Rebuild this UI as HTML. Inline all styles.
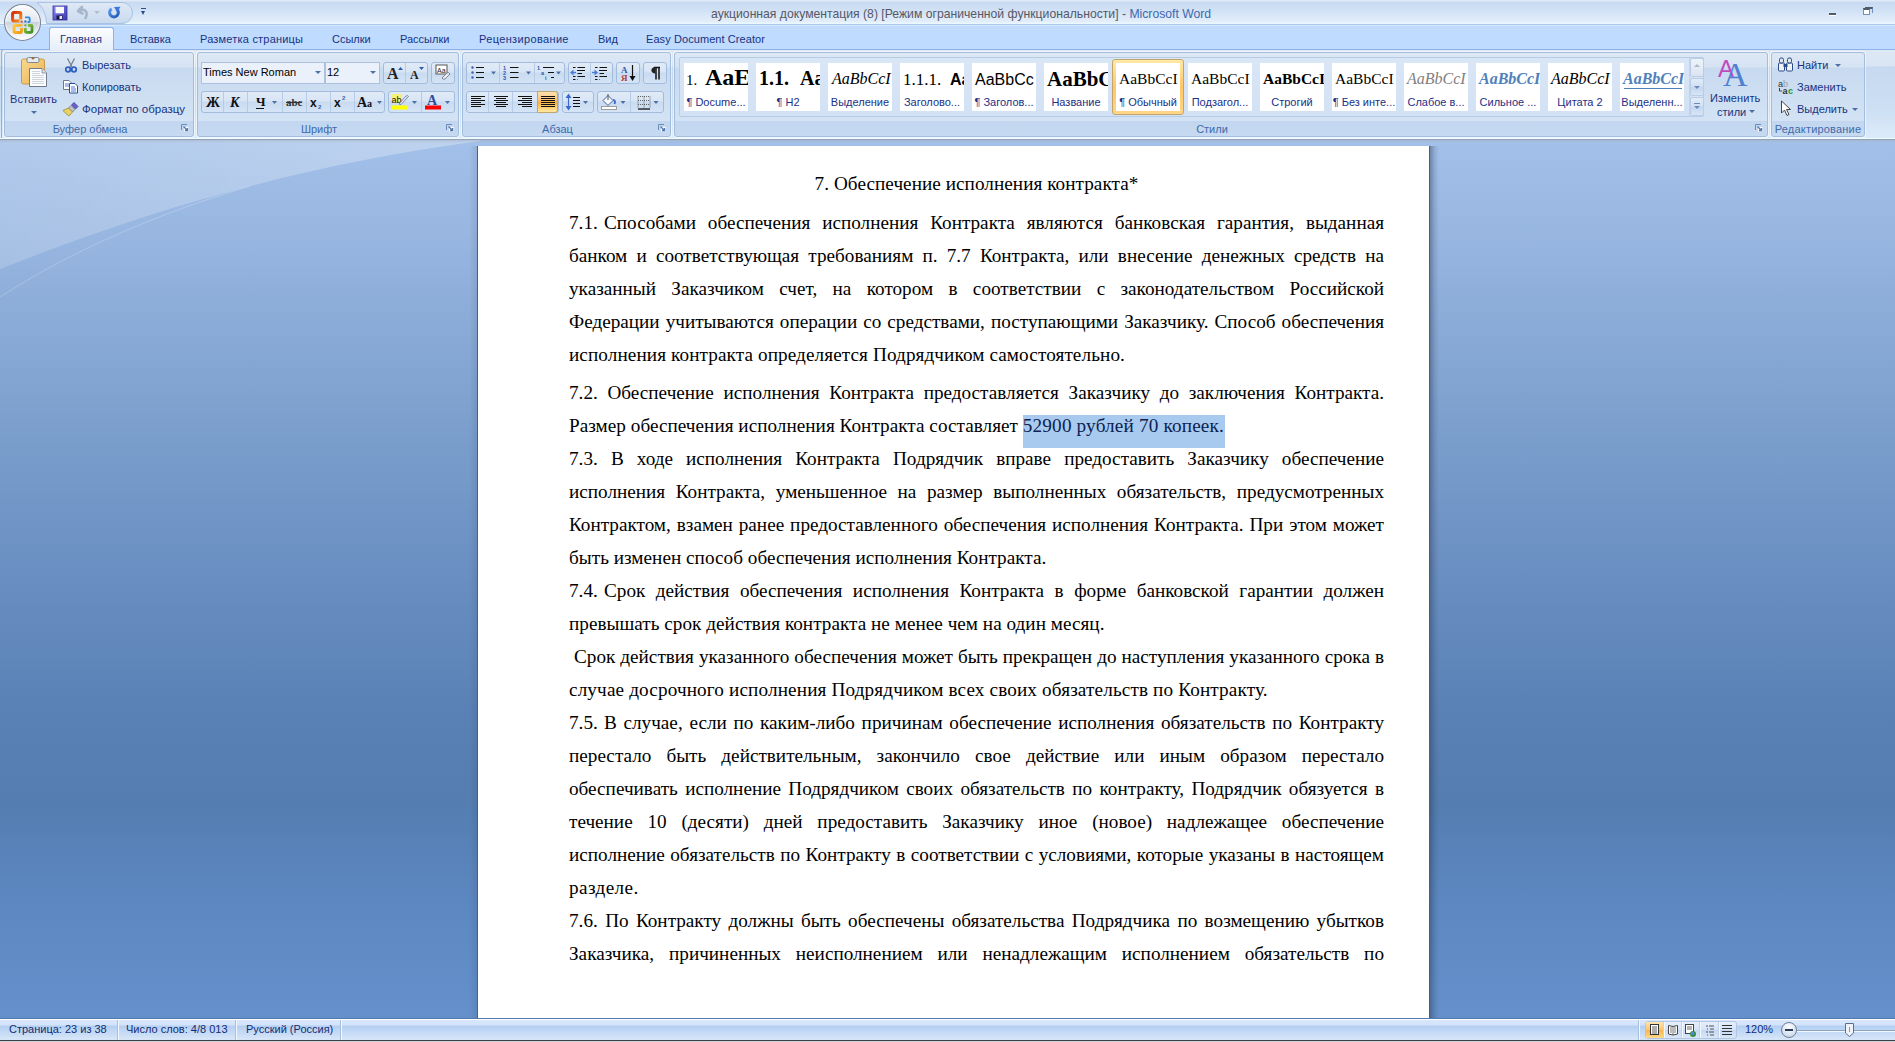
<!DOCTYPE html>
<html><head><meta charset="utf-8">
<style>
*{box-sizing:border-box}
html,body{margin:0;padding:0}
body{width:1895px;height:1042px;overflow:hidden;position:relative;font-family:"Liberation Sans",sans-serif;background:#bfdbff}
.a{position:absolute}
#title{left:0;top:0;width:1895px;height:26px;background:linear-gradient(#e0e9f6 0,#e0e9f6 1px,#c7daf2 2px,#d3e3f6 12px,#e4eefa 22px,#e9f7ff 23px,#e9f7ff 24px,#a9c9f1 24px,#a9c9f1 25px,#dce7f5 25px)}
#tabs{left:0;top:26px;width:1895px;height:23px;background:#bfdbff}
.grp{position:absolute;top:52px;height:85px;border:1px solid #a3bddc;border-radius:3px;background:linear-gradient(#dde8f5 0,#d6e3f3 14px,#c8daf0 15px,#d3e3f5 68px,#c2d7ef 68px,#c6daf2 84px);box-shadow:0 0 0 1px rgba(255,255,255,.55)}
#doc{left:0;top:140px;width:1895px;height:879px;background:linear-gradient(#a2c0e9 0px,#94b3de 120px,#7fa2cf 260px,#6b90c2 420px,#5a81b6 570px,#547db1 660px,#5c87c0 760px,#6590cb 879px);overflow:hidden}
#page{left:478px;top:6px;width:951px;height:880px;background:#fff;box-shadow:-1px 0 0 #565e6a,1px 0 0 #565e6a}
#shadowR{left:1430px;top:6px;width:9px;height:880px;background:linear-gradient(90deg,rgba(40,55,80,.42),rgba(40,55,80,.15) 50%,rgba(40,55,80,0))}
#shadowL{left:469px;top:6px;width:8px;height:880px;background:linear-gradient(270deg,rgba(40,60,90,.12),rgba(40,60,90,0))}
.ln{position:absolute;left:91px;width:815px;height:33px;line-height:33px;font-family:"Liberation Serif",serif;font-size:19.2px;color:#000;white-space:nowrap}
.j{text-align:justify;text-align-last:justify;word-spacing:-2px}
.sel{color:#0b2252;letter-spacing:0.17px}
#status{left:0;top:1019px;width:1895px;height:21px;background:linear-gradient(#d8e7fb 0,#d3e3f9 5px,#b2cef2 6px,#bcd5f4 9px,#c8dcf6 14px,#d8e6f7 19px,#cde2fb 20px);border-top:1px solid #fff}
#tb{left:0;top:1040px;width:1895px;height:2px;background:linear-gradient(#3c3f44 0,#3c3f44 1px,#cdd3dc 1px)}
.t{position:absolute;font-size:11px;line-height:13px;color:#17337f;white-space:nowrap}
.dd{position:absolute;width:0;height:0;border-left:3px solid transparent;border-right:3px solid transparent;border-top:3px solid #4c6fa5}
.combo{position:absolute;top:62px;height:22px;border:1px solid #abc1de;background:#eaf1fb}
.bg{position:absolute;height:22px;border:1px solid #a4bcdb;border-radius:3px;background:linear-gradient(#e1ebf7 0,#d8e5f5 45%,#c9dbf1 50%,#d5e4f6 100%)}
.sep{position:absolute;width:1px;background:#b5cbe6}
.gl{color:#3e6aaa}
.st{position:absolute;top:3px;font-size:11px;line-height:13px;color:#142c72;white-space:nowrap}
.ssep{position:absolute;top:0;width:1px;height:20px;background:#a9bfdc;box-shadow:1px 0 0 #f3f8ff}
</style></head>
<body>
<div id="title" class="a">
  <svg class="a" style="left:0;top:0" width="160" height="25">
    <defs><linearGradient id="qg" x1="0" y1="0" x2="0" y2="1"><stop offset="0" stop-color="#dfe9f6"/><stop offset="1" stop-color="#c9daef"/></linearGradient></defs>
    <path d="M37 2.5 H122 A10.5 10.5 0 0 1 122 23.5 H46.5 C46 14 43 7 37 2.5 Z" fill="url(#qg)" stroke="#a9c2e2" stroke-width="1"/>
  </svg>
  <svg class="a" style="left:52px;top:5px" width="16" height="16" viewBox="0 0 16 16">
    <defs><linearGradient id="sg" x1="0" y1="0" x2="1" y2="1"><stop offset="0" stop-color="#8a86f0"/><stop offset="1" stop-color="#3c36b0"/></linearGradient></defs>
    <rect x="1" y="1" width="14" height="14" fill="url(#sg)" stroke="#33309a" stroke-width="0.8"/>
    <rect x="3.5" y="1.8" width="8.5" height="6.5" fill="#f6f8fc"/>
    <rect x="4.5" y="10.5" width="6" height="4" fill="#1a1a3a"/>
    <rect x="7.5" y="11" width="2.5" height="3" fill="#e8e8f0"/>
  </svg>
  <svg class="a" style="left:75px;top:5px" width="16" height="16" viewBox="0 0 16 16">
    <path d="M3 6 L7 2 M3 6 L7.5 8.5 M3.5 6 C9 3 14 6 10.5 13" fill="none" stroke="#a7b6cc" stroke-width="2.6" stroke-linecap="round"/>
  </svg>
  <div class="a" style="left:94px;top:11px;width:0;height:0;border-left:3px solid transparent;border-right:3px solid transparent;border-top:3px solid #b1bccc"></div>
  <svg class="a" style="left:107px;top:5px" width="16" height="16" viewBox="0 0 16 16">
    <defs><linearGradient id="rg" x1="0" y1="0" x2="1" y2="1"><stop offset="0" stop-color="#5a9af0"/><stop offset="1" stop-color="#1f55b8"/></linearGradient></defs>
    <path d="M4.6 3.8 A4.4 4.4 0 1 0 9.6 4" fill="none" stroke="url(#rg)" stroke-width="3"/>
    <path d="M7 2 L13.5 1.8 L10.2 7.2 Z" fill="#3b78d8"/>
  </svg>
  <div class="a" style="left:141px;top:8px;width:5px;height:1px;background:#2b4d8a"></div>
  <div class="a" style="left:141px;top:11px;width:0;height:0;border-left:2.5px solid transparent;border-right:2.5px solid transparent;border-top:4px solid #2b4d8a"></div>
  <div class="a" style="left:711px;top:7px;font-size:12.2px;line-height:15px;color:#575866;white-space:nowrap">аукционная документация (8) [Режим ограниченной функциональности]<span> - </span><span style="color:#3d68b0">Microsoft Word</span></div>
  <div class="a" style="left:1829px;top:13px;width:7px;height:2px;background:#4f5a6a;box-shadow:0 1px 0 #fff"></div>
  <div class="a" style="left:1863px;top:8px;width:7px;height:7px;border:1px solid #6f8fbf;border-top:2px solid #4f5a6a;background:#fff"></div>
  <div class="a" style="left:1865px;top:7px;width:8px;height:6px;border:1px solid #6f8fbf;border-top:2px solid #4f5a6a;border-left:none;border-bottom:none"></div>
</div>
<div id="tabs" class="a">
  <div class="a" style="left:49px;top:1px;width:65px;height:23px;border:1px solid #8db2e3;border-bottom:none;border-radius:3px 3px 0 0;background:linear-gradient(#fbfdff,#e6eef9)"></div>
  <div class="t" style="left:60px;top:7px">Главная</div>
  <div class="t" style="left:130px;top:7px">Вставка</div>
  <div class="t" style="left:200px;top:7px;letter-spacing:0.2px">Разметка страницы</div>
  <div class="t" style="left:332px;top:7px">Ссылки</div>
  <div class="t" style="left:400px;top:7px">Рассылки</div>
  <div class="t" style="left:479px;top:7px;letter-spacing:0.35px">Рецензирование</div>
  <div class="t" style="left:598px;top:7px">Вид</div>
  <div class="t" style="left:646px;top:7px;letter-spacing:0.08px">Easy Document Creator</div>
</div>
<svg class="a" style="left:0;top:0;z-index:5" width="46" height="46" viewBox="0 0 46 46">
  <defs>
    <linearGradient id="ob1" x1="0" y1="0" x2="0" y2="1"><stop offset="0" stop-color="#fbfcfe"/><stop offset="0.47" stop-color="#e3e8ef"/><stop offset="0.5" stop-color="#c9d2de"/><stop offset="0.75" stop-color="#e6ebf2"/><stop offset="1" stop-color="#ffffff"/></linearGradient>
    <linearGradient id="lr" x1="0" y1="0" x2="1" y2="1"><stop offset="0" stop-color="#d32d0a"/><stop offset="1" stop-color="#f7941d"/></linearGradient>
    <linearGradient id="ly" x1="0" y1="0" x2="1" y2="1"><stop offset="0" stop-color="#ffc83d"/><stop offset="1" stop-color="#f39a12"/></linearGradient>
    <linearGradient id="lg" x1="0" y1="0" x2="1" y2="1"><stop offset="0" stop-color="#8cc63f"/><stop offset="1" stop-color="#3e8e1f"/></linearGradient>
  </defs>
  <circle cx="22.5" cy="22.5" r="18" fill="url(#ob1)" stroke="#7d8693" stroke-width="1.1"/>
  <circle cx="22.5" cy="22.5" r="16.8" fill="none" stroke="#ffffff" stroke-opacity="0.7" stroke-width="0.8"/>
  <path d="M20.8 19.5 V13.8 Q20.8 12.5 19.5 12.5 H14 Q12.6 12.5 12.6 14 V19.8 Q12.6 21 14 21 H19.5" fill="none" stroke="url(#lr)" stroke-width="3"/>
  <path d="M25 17.3 H28.8 Q29.7 17.3 29.7 18.2 V21.2 Q29.7 22 28.8 22 H27.5" fill="none" stroke="#2f8ae0" stroke-width="1.8"/>
  <path d="M21 25.3 H15.2 Q14 25.3 14 26.5 V31.3 Q14 32.5 15.2 32.5 H20.3 Q21.5 32.5 21.5 31.3 V28" fill="none" stroke="url(#ly)" stroke-width="2.8"/>
  <path d="M25.3 28 V31.3 Q25.3 32.3 26.3 32.3 H31 Q32 32.3 32 31.3 V26.3 Q32 25.3 31 25.3 H28" fill="none" stroke="url(#lg)" stroke-width="2.8"/>
  <circle cx="21.7" cy="21.6" r="1.2" fill="#e8541a"/><circle cx="25.4" cy="21.4" r="1.2" fill="#2a7fd6"/>
  <circle cx="21.7" cy="25.3" r="1.1" fill="#fbb232"/><circle cx="25.4" cy="25.3" r="1.1" fill="#5aa832"/>
</svg>
<div id="ribbon">
<div class="a" style="left:0;top:49px;width:1895px;height:1px;background:#8db2e3"></div>
<div class="a" style="left:50px;top:49px;width:63px;height:1px;background:#e9f0fa;z-index:2"></div>
<div class="a" style="left:0;top:50px;width:1895px;height:88px;background:linear-gradient(#dfe9f5 0,#d9e5f4 16px,#c6d9f0 17px,#cddff3 60px,#dcebfa 87px)"></div>
<div class="a" style="left:1px;top:49px;width:1900px;height:89px;border:1px solid #8db2e3;border-bottom:none;border-radius:3px 0 0 0"></div>
<div class="a" style="left:0;top:138px;width:1895px;height:1px;background:#effcff"></div>
<div class="a" style="left:0;top:139px;width:1895px;height:1px;background:#92a1b8"></div>
<div class="grp" style="left:4px;width:190px"></div>
<div class="t gl" style="left:4px;width:172px;top:123px;text-align:center">Буфер обмена</div>
<svg class="a" style="left:181px;top:124px" width="8" height="8" viewBox="0 0 8 8"><path d="M0.5 6V0.5H6" fill="none" stroke="#6a8bb5"/><rect x="3" y="3" width="4.5" height="4.5" fill="#fff"/><path d="M2.5 2.5L6.5 6.5M4 6.5H6.5V4" fill="none" stroke="#5377a8" stroke-width="1.3"/></svg>
<div class="grp" style="left:197px;width:262px"></div>
<div class="t gl" style="left:197px;width:244px;top:123px;text-align:center">Шрифт</div>
<svg class="a" style="left:446px;top:124px" width="8" height="8" viewBox="0 0 8 8"><path d="M0.5 6V0.5H6" fill="none" stroke="#6a8bb5"/><rect x="3" y="3" width="4.5" height="4.5" fill="#fff"/><path d="M2.5 2.5L6.5 6.5M4 6.5H6.5V4" fill="none" stroke="#5377a8" stroke-width="1.3"/></svg>
<div class="grp" style="left:462px;width:209px"></div>
<div class="t gl" style="left:462px;width:191px;top:123px;text-align:center">Абзац</div>
<svg class="a" style="left:658px;top:124px" width="8" height="8" viewBox="0 0 8 8"><path d="M0.5 6V0.5H6" fill="none" stroke="#6a8bb5"/><rect x="3" y="3" width="4.5" height="4.5" fill="#fff"/><path d="M2.5 2.5L6.5 6.5M4 6.5H6.5V4" fill="none" stroke="#5377a8" stroke-width="1.3"/></svg>
<div class="grp" style="left:674px;width:1094px"></div>
<div class="t gl" style="left:674px;width:1076px;top:123px;text-align:center">Стили</div>
<svg class="a" style="left:1755px;top:124px" width="8" height="8" viewBox="0 0 8 8"><path d="M0.5 6V0.5H6" fill="none" stroke="#6a8bb5"/><rect x="3" y="3" width="4.5" height="4.5" fill="#fff"/><path d="M2.5 2.5L6.5 6.5M4 6.5H6.5V4" fill="none" stroke="#5377a8" stroke-width="1.3"/></svg>
<div class="grp" style="left:1771px;width:94px"></div>
<div class="t gl" style="left:1771px;width:94px;top:123px;text-align:center;letter-spacing:0.2px">Редактирование</div>
<div class="a" style="left:679px;top:57px;width:1025px;height:60px;border:1px solid #b6cbe5;border-radius:2px;background:linear-gradient(#d9e6f6,#d2e1f4)"></div>
<svg class="a" style="left:684px;top:63px;background:#fff" width="64" height="48"><text x="2" y="22" font-family="Liberation Serif" font-size="15" font-weight="normal" font-style="normal" fill="#000">1.</text><text x="21" y="22" font-family="Liberation Serif" font-size="24" font-weight="bold" font-style="normal" fill="#000">AaE</text><text x="32" y="43" text-anchor="middle" font-family="Liberation Sans" font-size="11" fill="#1b2f86">¶ Docume...</text></svg>
<svg class="a" style="left:756px;top:63px;background:#fff" width="64" height="48"><text x="3" y="22" font-family="Liberation Serif" font-size="20" font-weight="bold" font-style="normal" fill="#000">1.1.</text><text x="44" y="22" font-family="Liberation Serif" font-size="20" font-weight="bold" font-style="normal" fill="#000">Aa</text><text x="32" y="43" text-anchor="middle" font-family="Liberation Sans" font-size="11" fill="#1b2f86">¶ H2</text></svg>
<svg class="a" style="left:828px;top:63px;background:#fff" width="64" height="48"><text x="4" y="21" font-family="Liberation Serif" font-size="16" font-weight="normal" font-style="italic" fill="#000">AaBbCcI</text><text x="32" y="43" text-anchor="middle" font-family="Liberation Sans" font-size="11" fill="#1b2f86">Выделение</text></svg>
<svg class="a" style="left:900px;top:63px;background:#fff" width="64" height="48"><text x="3" y="21.5" font-family="Liberation Serif" font-size="17" font-weight="normal" font-style="normal" fill="#000">1.1.1.</text><text x="50" y="21.5" font-family="Liberation Sans" font-size="16" font-weight="bold" font-style="normal" fill="#000">Aa</text><text x="32" y="43" text-anchor="middle" font-family="Liberation Sans" font-size="11" fill="#1b2f86">Заголово...</text></svg>
<svg class="a" style="left:972px;top:63px;background:#fff" width="64" height="48"><text x="3" y="21.5" font-family="Liberation Sans" font-size="16" font-weight="normal" font-style="normal" fill="#000">AaBbCc</text><text x="32" y="43" text-anchor="middle" font-family="Liberation Sans" font-size="11" fill="#1b2f86">¶ Заголов...</text></svg>
<svg class="a" style="left:1044px;top:63px;background:#fff" width="64" height="48"><text x="3" y="23" font-family="Liberation Serif" font-size="21" font-weight="bold" font-style="normal" fill="#000">AaBbC</text><text x="32" y="43" text-anchor="middle" font-family="Liberation Sans" font-size="11" fill="#1b2f86">Название</text></svg>
<div class="a" style="left:1112px;top:59px;width:72px;height:56px;border:1px solid #c2a46c;border-radius:3px;background:linear-gradient(#ffe9a8,#ffc766 50%,#ffd587)"></div>
<svg class="a" style="left:1116px;top:63px;background:#fff" width="64" height="48"><text x="3" y="21" font-family="Liberation Serif" font-size="15.5" font-weight="normal" font-style="normal" fill="#000">AaBbCcI</text><text x="32" y="43" text-anchor="middle" font-family="Liberation Sans" font-size="11" fill="#1b2f86">¶ Обычный</text></svg>
<svg class="a" style="left:1188px;top:63px;background:#fff" width="64" height="48"><text x="3" y="21" font-family="Liberation Serif" font-size="15.5" font-weight="normal" font-style="normal" fill="#000">AaBbCcI</text><text x="32" y="43" text-anchor="middle" font-family="Liberation Sans" font-size="11" fill="#1b2f86">Подзагол...</text></svg>
<svg class="a" style="left:1260px;top:63px;background:#fff" width="64" height="48"><text x="3" y="21" font-family="Liberation Serif" font-size="15.5" font-weight="bold" font-style="normal" fill="#000">AaBbCcI</text><text x="32" y="43" text-anchor="middle" font-family="Liberation Sans" font-size="11" fill="#1b2f86">Строгий</text></svg>
<svg class="a" style="left:1332px;top:63px;background:#fff" width="64" height="48"><text x="3" y="21" font-family="Liberation Serif" font-size="15.5" font-weight="normal" font-style="normal" fill="#000">AaBbCcI</text><text x="32" y="43" text-anchor="middle" font-family="Liberation Sans" font-size="11" fill="#1b2f86">¶ Без инте...</text></svg>
<svg class="a" style="left:1404px;top:63px;background:#fff" width="64" height="48"><text x="3" y="21" font-family="Liberation Serif" font-size="16" font-weight="normal" font-style="italic" fill="#7f7f7f">AaBbCcI</text><text x="32" y="43" text-anchor="middle" font-family="Liberation Sans" font-size="11" fill="#1b2f86">Слабое в...</text></svg>
<svg class="a" style="left:1476px;top:63px;background:#fff" width="64" height="48"><text x="3" y="21" font-family="Liberation Serif" font-size="16" font-weight="bold" font-style="italic" fill="#4f81bd">AaBbCcI</text><text x="32" y="43" text-anchor="middle" font-family="Liberation Sans" font-size="11" fill="#1b2f86">Сильное ...</text></svg>
<svg class="a" style="left:1548px;top:63px;background:#fff" width="64" height="48"><text x="3" y="21" font-family="Liberation Serif" font-size="16" font-weight="normal" font-style="italic" fill="#000">AaBbCcI</text><text x="32" y="43" text-anchor="middle" font-family="Liberation Sans" font-size="11" fill="#1b2f86">Цитата 2</text></svg>
<svg class="a" style="left:1620px;top:63px;background:#fff" width="64" height="48"><text x="3" y="21" font-family="Liberation Serif" font-size="16" font-weight="bold" font-style="italic" fill="#4f81bd">AaBbCcI</text><rect x="4" y="25" width="58" height="1" fill="#4f81bd"/><text x="32" y="43" text-anchor="middle" font-family="Liberation Sans" font-size="11" fill="#1b2f86">Выделенн...</text></svg>
<div class="a" style="left:1689px;top:58px;width:14px;height:58px;border-left:1px solid #c2d4ea"></div>
<div class="a" style="left:1690px;top:58px;width:14px;height:19px;border:1px solid #b9cde6;border-radius:2px;background:linear-gradient(#eef3fa,#dbe5f2)"></div>
<div class="a" style="left:1690px;top:78px;width:14px;height:18px;border:1px solid #b9cde6;border-radius:2px;background:linear-gradient(#e2ecf8,#cfdff3 50%,#c3d6ef 51%,#d7e5f6)"></div>
<div class="a" style="left:1690px;top:97px;width:14px;height:19px;border:1px solid #b9cde6;border-radius:2px;background:linear-gradient(#e2ecf8,#cfdff3 50%,#c3d6ef 51%,#d7e5f6)"></div>
<div class="a" style="left:1694px;top:64px;width:0;height:0;border-left:3px solid transparent;border-right:3px solid transparent;border-bottom:3px solid #b0bccc"></div>
<div class="a" style="left:1694px;top:86px;width:0;height:0;border-left:3px solid transparent;border-right:3px solid transparent;border-top:3px solid #6a8ab8"></div>
<div class="a" style="left:1694px;top:103px;width:6px;height:1px;background:#6a8ab8"></div>
<div class="a" style="left:1694px;top:106px;width:0;height:0;border-left:3px solid transparent;border-right:3px solid transparent;border-top:3px solid #6a8ab8"></div>
<!-- Clipboard -->
<svg class="a" style="left:20px;top:56px" width="28" height="32" viewBox="0 0 28 32">
  <defs><linearGradient id="cbg" x1="0" y1="0" x2="1" y2="1"><stop offset="0" stop-color="#f9d88f"/><stop offset="1" stop-color="#e9b455"/></linearGradient></defs>
  <rect x="1.5" y="3" width="23" height="25" rx="2" fill="url(#cbg)" stroke="#c89a4e"/>
  <rect x="7" y="1.5" width="12" height="5" rx="1.5" fill="#e7ebf0" stroke="#7d8794"/>
  <circle cx="13" cy="2.2" r="1.3" fill="#9a6a3a"/>
  <path d="M9.5 12.5 H22 L26.5 17 V30.5 H9.5 Z" fill="#fbfcfe" stroke="#6f7b8b"/>
  <path d="M22 12.5 V17 H26.5" fill="#dfe4ea" stroke="#8e99a6"/>
  <path d="M12 15.5H20M12 17.5H20M12 19.5H24M12 21.5H24M12 23.5H24M12 25.5H24M12 27.5H24" stroke="#c9ced6" stroke-width="0.9"/>
</svg>
<div class="t" style="left:10px;top:93px;letter-spacing:0.05px">Вставить</div>
<div class="dd" style="left:31px;top:111px"></div>
<svg class="a" style="left:65px;top:58px" width="12" height="15" viewBox="0 0 12 15">
  <path d="M2.5 0.5 L7 9 M9.5 0.5 L5 9" stroke="#7a808a" stroke-width="1.3"/>
  <circle cx="3" cy="11.5" r="2.3" fill="none" stroke="#2f5fc0" stroke-width="1.8"/>
  <circle cx="9" cy="11.5" r="2.3" fill="none" stroke="#2f5fc0" stroke-width="1.8"/>
</svg>
<div class="t" style="left:82px;top:59px">Вырезать</div>
<svg class="a" style="left:62px;top:79px" width="17" height="15" viewBox="0 0 17 15">
  <path d="M1.5 1.5H7L9.5 4V10.5H1.5Z" fill="#fff" stroke="#6c7a8f"/>
  <path d="M3 5H7M3 7H8" stroke="#4a7bd0"/>
  <path d="M7.5 4.5H13L15.5 7V14H7.5Z" fill="#fff" stroke="#2e4f90"/>
  <path d="M9 8H13M9 10H14M9 12H14" stroke="#4a7bd0"/>
</svg>
<div class="t" style="left:82px;top:81px">Копировать</div>
<svg class="a" style="left:62px;top:101px" width="18" height="16" viewBox="0 0 18 16">
  <path d="M12 1.5 L16 5.5 L13.5 8 L9.5 4 Z" fill="#6a5fcf" stroke="#433a9a" stroke-width="0.8"/>
  <path d="M9 4.5 L13 8.5 L10.5 11 L6.5 7 Z" fill="#c0c4cc" stroke="#6f747c" stroke-width="0.8"/>
  <path d="M6.5 7 L10.5 11 L7 15 Q3 12 1 9.5 Z" fill="#e8d466" stroke="#9a8a34" stroke-width="0.8"/>
</svg>
<div class="t" style="left:82px;top:103px;font-size:11.5px">Формат по образцу</div>

<!-- Font group -->
<div class="combo" style="left:201px;width:124px"></div>
<div class="t" style="left:203px;top:66px;color:#000">Times New Roman</div>
<div class="dd" style="left:315px;top:71px"></div>
<div class="combo" style="left:325px;width:55px"></div>
<div class="t" style="left:327px;top:66px;color:#000">12</div>
<div class="dd" style="left:370px;top:71px"></div>
<div class="bg" style="left:383px;top:62px;width:45px"></div>
<div class="sep" style="left:405px;top:63px;height:20px"></div>
<svg class="a" style="left:385px;top:64px" width="42" height="18" viewBox="0 0 42 18">
  <text x="2" y="15" font-family="Liberation Serif" font-weight="bold" font-size="16" fill="#222">A</text>
  <path d="M13 6 L15.5 3 L18 6 Z" fill="#2b5ca8"/>
  <text x="25" y="15" font-family="Liberation Serif" font-weight="bold" font-size="12" fill="#222">A</text>
  <path d="M34 3 L36.5 6 L39 3 Z" fill="#2b5ca8"/>
</svg>
<div class="bg" style="left:431px;top:62px;width:24px"></div>
<svg class="a" style="left:434px;top:64px" width="18" height="18" viewBox="0 0 18 18">
  <rect x="2" y="1" width="11" height="9" fill="#fff" stroke="#555"/>
  <text x="3" y="8.5" font-family="Liberation Sans" font-size="7" fill="#222">Aa</text>
  <path d="M8 14 L13 9 Q15 8 16 10 L11 15 Q9 16 8 14 Z" fill="#e8edf3" stroke="#7b8694"/>
</svg>
<div class="bg" style="left:201px;top:91px;width:184px"></div>
<div class="sep" style="left:223px;top:92px;height:20px"></div>
<div class="sep" style="left:247px;top:92px;height:20px"></div>
<div class="sep" style="left:282px;top:92px;height:20px"></div>
<div class="sep" style="left:306px;top:92px;height:20px"></div>
<div class="sep" style="left:330px;top:92px;height:20px"></div>
<div class="sep" style="left:354px;top:92px;height:20px"></div>
<svg class="a" style="left:201px;top:91px" width="184" height="22" viewBox="0 0 184 22">
  <text x="5" y="16" font-family="Liberation Serif" font-weight="bold" font-size="14" fill="#111">Ж</text>
  <text x="29" y="16" font-family="Liberation Serif" font-weight="bold" font-style="italic" font-size="14" fill="#111">К</text>
  <text x="55" y="15" font-family="Liberation Serif" font-weight="bold" font-size="13" fill="#111">Ч</text>
  <rect x="55" y="17" width="8" height="1" fill="#111"/>
  <path d="M71 10 L76 10 L73.5 13 Z" fill="#4c6fa5"/>
  <text x="85" y="15" font-family="Liberation Serif" font-weight="bold" font-size="11" fill="#333">abc</text>
  <rect x="85" y="11" width="16" height="1" fill="#333"/>
  <text x="109" y="16" font-family="Liberation Sans" font-weight="bold" font-size="12" fill="#111">x</text>
  <text x="117" y="18" font-family="Liberation Sans" font-weight="bold" font-size="6" fill="#3a62b0">2</text>
  <text x="133" y="16" font-family="Liberation Sans" font-weight="bold" font-size="12" fill="#111">x</text>
  <text x="141" y="9" font-family="Liberation Sans" font-weight="bold" font-size="6" fill="#3a62b0">2</text>
  <text x="156" y="16" font-family="Liberation Serif" font-weight="bold" font-size="14" fill="#111">A</text>
  <text x="166" y="16" font-family="Liberation Serif" font-weight="bold" font-size="10" fill="#111">a</text>
  <path d="M176 10 L181 10 L178.5 13 Z" fill="#4c6fa5"/>
</svg>
<div class="bg" style="left:388px;top:91px;width:67px"></div>
<div class="sep" style="left:421px;top:92px;height:20px"></div>
<svg class="a" style="left:388px;top:91px" width="67" height="22" viewBox="0 0 67 22">
  <rect x="4" y="3" width="10" height="9" fill="#f5f07a"/>
  <text x="3.5" y="11.5" font-family="Liberation Sans" font-size="9" fill="#111">ab</text>
  <path d="M11 13 L18 5 Q19.5 4 20.5 5.5 L13 13.5 Z" fill="#eaf0f8" stroke="#5d6f8c" stroke-width="0.8"/>
  <rect x="4" y="14.5" width="16" height="4" fill="#ffff00"/>
  <path d="M24 10 L29 10 L26.5 13 Z" fill="#4c6fa5"/>
  <text x="39" y="14" font-family="Liberation Serif" font-weight="bold" font-size="14" fill="#2d4f9a">A</text>
  <rect x="37" y="14.5" width="16" height="4" fill="#ff0000"/>
  <path d="M57 10 L62 10 L59.5 13 Z" fill="#4c6fa5"/>
</svg>

<!-- Paragraph group -->
<div class="bg" style="left:466px;top:62px;width:99px"></div>
<div class="sep" style="left:499px;top:63px;height:20px"></div>
<div class="sep" style="left:534px;top:63px;height:20px"></div>
<svg class="a" style="left:466px;top:62px" width="99" height="22" viewBox="0 0 99 22">
  <g fill="#3a62b8"><circle cx="6.5" cy="5.5" r="1.2"/><circle cx="6.5" cy="10.5" r="1.2"/><circle cx="6.5" cy="15.5" r="1.2"/></g>
  <path d="M10 5.5H18M10 10.5H18M10 15.5H18" stroke="#111" stroke-width="1.1"/>
  <path d="M25 9.5H30L27.5 12.5Z" fill="#4c6fa5"/>
  <text x="37" y="8.3" font-family="Liberation Sans" font-weight="bold" font-size="5.5" fill="#2a55b0">1</text>
  <text x="37" y="13.3" font-family="Liberation Sans" font-weight="bold" font-size="5.5" fill="#2a55b0">2</text>
  <text x="37" y="18.3" font-family="Liberation Sans" font-weight="bold" font-size="5.5" fill="#2a55b0">3</text>
  <path d="M44 5.5H52.5M44 10.5H52.5M44 15.5H52.5" stroke="#111" stroke-width="1.1"/>
  <path d="M60 9.5H65L62.5 12.5Z" fill="#4c6fa5"/>
  <text x="71" y="8.3" font-family="Liberation Sans" font-weight="bold" font-size="5.5" fill="#2a55b0">1</text>
  <text x="75" y="13.3" font-family="Liberation Sans" font-weight="bold" font-size="5.5" fill="#2a55b0">a</text>
  <text x="79" y="18.3" font-family="Liberation Sans" font-weight="bold" font-size="5.5" fill="#2a55b0">i</text>
  <path d="M77 5.5H88M82 10.5H88M85 15.5H88" stroke="#111" stroke-width="1.1"/>
  <path d="M90 9.5H95L92.5 12.5Z" fill="#4c6fa5"/>
</svg>
<div class="bg" style="left:568px;top:62px;width:45px"></div>
<div class="sep" style="left:590px;top:63px;height:20px"></div>
<svg class="a" style="left:568px;top:62px" width="45" height="22" viewBox="0 0 45 22">
  <path d="M5 5.5H7.5M9.5 5.5H17M9 8.5H17M9.5 11.5H14M9.5 14.5H17M5 14.5H7.5M5 17.5H7.5M9.5 17.5H10" stroke="#111" stroke-width="1.2"/>
  <path d="M2 10.5 L5.5 7.5 V13.5Z" fill="#4a7ad8"/><path d="M5 10.5H8" stroke="#4a7ad8" stroke-width="1.4"/>
  <path d="M27 5.5H29.5M31.5 5.5H39M31 8.5H39M31.5 11.5H36M31.5 14.5H39M27 14.5H29.5M27 17.5H29.5M31.5 17.5H32" stroke="#111" stroke-width="1.2"/>
  <path d="M30 10.5 L26.5 7.5 V13.5Z" fill="#4a7ad8"/><path d="M24 10.5H27" stroke="#4a7ad8" stroke-width="1.4"/>
</svg>
<div class="bg" style="left:616px;top:62px;width:24px"></div>
<svg class="a" style="left:616px;top:62px" width="24" height="22" viewBox="0 0 24 22">
  <text x="5" y="10.5" font-family="Liberation Serif" font-weight="bold" font-size="9" fill="#2f5ab0">A</text>
  <text x="5" y="19" font-family="Liberation Serif" font-weight="bold" font-size="9" fill="#b0403a">Я</text>
  <path d="M16.5 3V17" stroke="#111" stroke-width="1.2"/><path d="M13.5 14 L16.5 19 L19.5 14Z" fill="#111"/>
</svg>
<div class="bg" style="left:643px;top:62px;width:24px"></div>
<svg class="a" style="left:643px;top:62px" width="24" height="22" viewBox="0 0 24 22">
  <path d="M11 5.5 H17 M13 5 V17.5 M16 5 V17.5" stroke="#111" stroke-width="1.5"/>
  <path d="M12.5 5 C7 5 7 11.5 12.5 11.5 Z" fill="#222"/>
</svg>
<div class="bg" style="left:466px;top:91px;width:93px"></div>
<div class="sep" style="left:488px;top:92px;height:20px"></div>
<div class="sep" style="left:512px;top:92px;height:20px"></div>
<div class="a" style="left:537px;top:91px;width:21px;height:22px;border:1px solid #c2a46c;border-radius:0 3px 3px 0;background:linear-gradient(#fde2b0 0,#fdc57a 40%,#fbae3f 50%,#fdd782 85%,#feeaa0 100%)"></div>
<svg class="a" style="left:466px;top:91px" width="93" height="22" viewBox="0 0 93 22">
  <g stroke="#111" stroke-width="1.1">
  <path d="M5 5.5H19M5 7.5H15M5 9.5H19M5 11.5H15M5 13.5H19M5 15.5H15"/>
  <path d="M28 5.5H42M30 7.5H40M28 9.5H42M30 11.5H40M28 13.5H42M30 15.5H40"/>
  <path d="M52 5.5H66M56 7.5H66M52 9.5H66M56 11.5H66M52 13.5H66M56 15.5H66"/>
  <path d="M75 5.5H89M75 7.5H89M75 9.5H89M75 11.5H89M75 13.5H89M75 15.5H89"/>
  </g>
</svg>
<div class="bg" style="left:562px;top:91px;width:32px"></div>
<svg class="a" style="left:562px;top:91px" width="32" height="22" viewBox="0 0 32 22">
  <path d="M6.5 4V18" stroke="#3a6ad0" stroke-width="1.2"/>
  <path d="M3.5 7 L6.5 2.5 L9.5 7Z M3.5 15 L6.5 19.5 L9.5 15Z" fill="#3a6ad0"/>
  <path d="M11 6.5H18M11 9.5H18M11 12.5H18M11 15.5H18" stroke="#111" stroke-width="1.2"/>
  <path d="M21 10H26L23.5 13Z" fill="#4c6fa5"/>
</svg>
<div class="bg" style="left:597px;top:91px;width:67px"></div>
<div class="sep" style="left:630px;top:92px;height:20px"></div>
<svg class="a" style="left:597px;top:91px" width="67" height="22" viewBox="0 0 67 22">
  <path d="M6 9.5 L11 4.5 L16 9.5 L11 14.5 Z" fill="#f4f7fb" stroke="#2b4f8c" stroke-width="0.9"/>
  <path d="M11 3 V9" stroke="#555" stroke-width="1"/>
  <path d="M16 9 Q19 9 17.5 13" fill="none" stroke="#3c6fd0" stroke-width="2"/>
  <rect x="4.5" y="15.5" width="15" height="3" fill="#fff" stroke="#888" stroke-width="0.8"/>
  <path d="M23.5 10H28.5L26 13Z" fill="#4c6fa5"/>
  <path d="M41 5.5H53M41 9.5H53M41 13.5H53M41 5.5V17M47 5.5V17M53 5.5V17" stroke="#555" stroke-width="0.9" stroke-dasharray="1 1"/>
  <path d="M41 18H53" stroke="#111" stroke-width="1.3"/>
  <path d="M56.5 10H61.5L59 13Z" fill="#4c6fa5"/>
</svg>

<!-- Change styles -->
<svg class="a" style="left:1718px;top:57px" width="34" height="30" viewBox="0 0 34 30">
  <text x="0" y="20" font-family="Liberation Sans" font-size="24" fill="#c04ac0">A</text>
  <text x="5" y="29" font-family="Liberation Serif" font-size="34" fill="#4f81d0">A</text>
</svg>
<div class="t" style="left:1710px;top:92px;letter-spacing:0.1px">Изменить</div>
<div class="t" style="left:1717px;top:106px">стили</div>
<div class="dd" style="left:1749px;top:110px"></div>

<!-- Editing -->
<svg class="a" style="left:1777px;top:57px" width="17" height="15" viewBox="0 0 17 15">
  <rect x="1.5" y="6" width="6" height="8" rx="1" fill="#eef2f8" stroke="#2c4a86"/>
  <rect x="9.5" y="6" width="6" height="8" rx="1" fill="#eef2f8" stroke="#2c4a86"/>
  <rect x="2.5" y="1" width="4" height="5" rx="1.5" fill="#dfe6f0" stroke="#2c4a86"/>
  <rect x="10.5" y="1" width="4" height="5" rx="1.5" fill="#dfe6f0" stroke="#2c4a86"/>
  <rect x="6.5" y="7" width="4" height="3" fill="#2c4a86"/>
</svg>
<div class="t" style="left:1797px;top:59px">Найти</div>
<div class="dd" style="left:1835px;top:64px"></div>
<svg class="a" style="left:1777px;top:78px" width="19" height="17" viewBox="0 0 19 17">
  <text x="1" y="8.5" font-family="Liberation Sans" font-size="9" fill="#333">a</text>
  <text x="6" y="8.5" font-family="Liberation Serif" font-size="10" fill="#999">b</text>
  <path d="M2.5 10 V13 H5" fill="none" stroke="#333" stroke-width="0.9"/>
  <text x="5.5" y="16" font-family="Liberation Sans" font-weight="bold" font-size="9" fill="#333">a</text>
  <text x="11" y="16" font-family="Liberation Sans" font-weight="bold" font-size="9" fill="#1e9a1e">c</text>
</svg>
<div class="t" style="left:1797px;top:81px">Заменить</div>
<svg class="a" style="left:1780px;top:100px" width="12" height="17" viewBox="0 0 12 17">
  <path d="M1.5 1 V13 L4.5 10 L7 15.5 L9 14.5 L6.5 9.5 H10.5 Z" fill="#fff" stroke="#333" stroke-width="0.9" stroke-linejoin="round"/>
</svg>
<div class="t" style="left:1797px;top:103px">Выделить</div>
<div class="dd" style="left:1852px;top:108px"></div>

</div>
<div id="doc" class="a">
  <svg class="a" style="left:0;top:0" width="480" height="200">
    <defs><linearGradient id="sw" x1="0" y1="0" x2="1" y2="0"><stop offset="0" stop-color="#fff" stop-opacity="0.17"/><stop offset="1" stop-color="#fff" stop-opacity="0.3"/></linearGradient></defs>
    <path d="M0 0 H480 V1 C300 25 150 70 0 129 Z" fill="url(#sw)"/>
    <path d="M0 157 C70 112 150 76 250 46" fill="none" stroke="#fff" stroke-opacity="0.22" stroke-width="1"/>
  </svg>
  <div class="a" style="left:0;top:0;width:1895px;height:3px;background:linear-gradient(rgba(170,180,195,.6),rgba(170,180,195,0))"></div>
  <div id="shadowL" class="a"></div>
  <div id="shadowR" class="a"></div>
  <div id="page" class="a">
<div class="ln" style="top:21px;text-align:center;letter-spacing:0.05px">7. Обеспечение исполнения контракта*</div>
<div class="a" style="left:545px;top:269px;width:202px;height:33px;background:#a9caef"></div>
<div class="ln" style="top:60px">7.1.</div>
<div class="ln j" style="top:60px;left:126px;width:780px">Способами обеспечения исполнения Контракта являются банковская гарантия, выданная</div>
<div class="ln j" style="top:93px">банком и соответствующая требованиям п. 7.7 Контракта, или внесение денежных средств на</div>
<div class="ln j" style="top:126px">указанный Заказчиком счет, на котором в соответствии с законодательством Российской</div>
<div class="ln j" style="top:159px">Федерации учитываются операции со средствами, поступающими Заказчику. Способ обеспечения</div>
<div class="ln" style="top:192px;letter-spacing:0.1px">исполнения контракта определяется Подрядчиком самостоятельно.</div>
<div class="ln j" style="top:230px">7.2. Обеспечение исполнения Контракта предоставляется Заказчику до заключения Контракта.</div>
<div class="ln" style="top:263px;letter-spacing:0.03px">Размер обеспечения исполнения Контракта составляет <span class="sel">52900 рублей 70 копеек.</span></div>
<div class="ln j" style="top:296px">7.3. В ходе исполнения Контракта Подрядчик вправе предоставить Заказчику обеспечение</div>
<div class="ln j" style="top:329px">исполнения Контракта, уменьшенное на размер выполненных обязательств, предусмотренных</div>
<div class="ln j" style="top:362px">Контрактом, взамен ранее предоставленного обеспечения исполнения Контракта. При этом может</div>
<div class="ln" style="top:395px;letter-spacing:0.03px">быть изменен способ обеспечения исполнения Контракта.</div>
<div class="ln" style="top:428px">7.4.</div>
<div class="ln j" style="top:428px;left:126px;width:780px">Срок действия обеспечения исполнения Контракта в форме банковской гарантии должен</div>
<div class="ln" style="top:461px;letter-spacing:0.025px">превышать срок действия контракта не менее чем на один месяц.</div>
<div class="ln j" style="top:494px;left:96px;width:810px">Срок действия указанного обеспечения может быть прекращен до наступления указанного срока в</div>
<div class="ln" style="top:527px;letter-spacing:0.14px">случае досрочного исполнения Подрядчиком всех своих обязательств по Контракту.</div>
<div class="ln" style="top:560px">7.5.</div>
<div class="ln j" style="top:560px;left:126px;width:780px">В случае, если по каким-либо причинам обеспечение исполнения обязательств по Контракту</div>
<div class="ln j" style="top:593px">перестало быть действительным, закончило свое действие или иным образом перестало</div>
<div class="ln j" style="top:626px">обеспечивать исполнение Подрядчиком своих обязательств по контракту, Подрядчик обязуется в</div>
<div class="ln j" style="top:659px">течение 10 (десяти) дней предоставить Заказчику иное (новое) надлежащее обеспечение</div>
<div class="ln j" style="top:692px">исполнение обязательств по Контракту в соответствии с условиями, которые указаны в настоящем</div>
<div class="ln" style="top:725px;letter-spacing:0.4px">разделе.</div>
<div class="ln j" style="top:758px">7.6. По Контракту должны быть обеспечены обязательства Подрядчика по возмещению убытков</div>
<div class="ln j" style="top:791px">Заказчика, причиненных неисполнением или ненадлежащим исполнением обязательств по</div>

  </div>
</div>
<div id="status" class="a">
  <div class="st" style="left:9px">Страница: 23 из 38</div>
  <div class="ssep" style="left:117px"></div>
  <div class="st" style="left:126px">Число слов: 4/8 013</div>
  <div class="ssep" style="left:235px"></div>
  <div class="st" style="left:246px">Русский (Россия)</div>
  <div class="ssep" style="left:340px"></div>
  <div class="ssep" style="left:1638px"></div>
  <div class="a" style="left:1645px;top:1px;width:92px;height:18px;border:1px solid #b1c6e2;border-radius:3px;background:linear-gradient(#e6eefa,#d4e3f7 50%,#c5d9f4 51%,#d9e7f8)"></div>
  <div class="a" style="left:1646px;top:2px;width:17px;height:16px;background:linear-gradient(#fde5b2,#fcc46f 50%,#fbb24a 51%,#fed98a)"></div>
  <div class="ssep" style="left:1663px;top:2px;height:16px;background:#c3d4ea"></div>
  <div class="ssep" style="left:1681px;top:2px;height:16px;background:#c3d4ea"></div>
  <div class="ssep" style="left:1699px;top:2px;height:16px;background:#c3d4ea"></div>
  <div class="ssep" style="left:1718px;top:2px;height:16px;background:#c3d4ea"></div>
  <svg class="a" style="left:1645px;top:1px" width="92" height="18" viewBox="0 0 92 18">
    <rect x="5.5" y="3.5" width="8" height="10" fill="#fff" stroke="#333"/>
    <path d="M7 6H12M7 8H12M7 10H12M7 12H12" stroke="#333" stroke-width="0.8"/>
    <path d="M23.5 4.5 L28 5.5 L32.5 4.5 V13 L28 14 L23.5 13 Z" fill="#fff" stroke="#444"/>
    <path d="M28 5.5V14M25 7H27M25 9H27M25 11H27M29 7H31M29 9H31M29 11H31" stroke="#555" stroke-width="0.8"/>
    <rect x="40.5" y="3.5" width="8" height="9" fill="#fff" stroke="#444"/>
    <path d="M42 6H47M42 8H47" stroke="#444" stroke-width="0.8"/>
    <circle cx="48" cy="13" r="3" fill="#3a8d3a"/><circle cx="47.5" cy="12.5" r="1.8" fill="#4a8ae0"/>
    <path d="M61 5H63M64 5H69M62 8H63M65 8H69M61 11H63M64 11H69M62 14H63M65 14H69" stroke="#444" stroke-width="0.9"/>
    <path d="M77 4.5H87M77 7.5H87M77 10.5H87M77 13.5H87" stroke="#333" stroke-width="1"/>
  </svg>
  <div class="st" style="left:1745px;top:3px">120%</div>
  <svg class="a" style="left:1780px;top:1px" width="115" height="20" viewBox="0 0 115 20">
    <circle cx="9" cy="9" r="7.5" fill="url(#zm)" stroke="#6d7f99"/>
    <rect x="5" y="8" width="8" height="2" fill="#2b3a55"/>
    <path d="M17 9.5H115" stroke="#8aa2c4" stroke-width="1"/>
    <path d="M17 10.5H115" stroke="#f2f7ff" stroke-width="1"/>
    <path d="M65.5 2.5H73.5V12L69.5 15.5L65.5 12Z" fill="#eef3fa" stroke="#5d6f8a"/>
    <path d="M69.5 6V11" stroke="#8a9ab0"/>
    <defs><radialGradient id="zm" cx="0.5" cy="0.3" r="0.7"><stop offset="0" stop-color="#ffffff"/><stop offset="1" stop-color="#c9d7ea"/></radialGradient></defs>
  </svg>
</div>
<div id="tb" class="a"></div>
<div class="a" style="left:0;top:1018px;width:1895px;height:1px;background:#5079b0"></div>
</body></html>
